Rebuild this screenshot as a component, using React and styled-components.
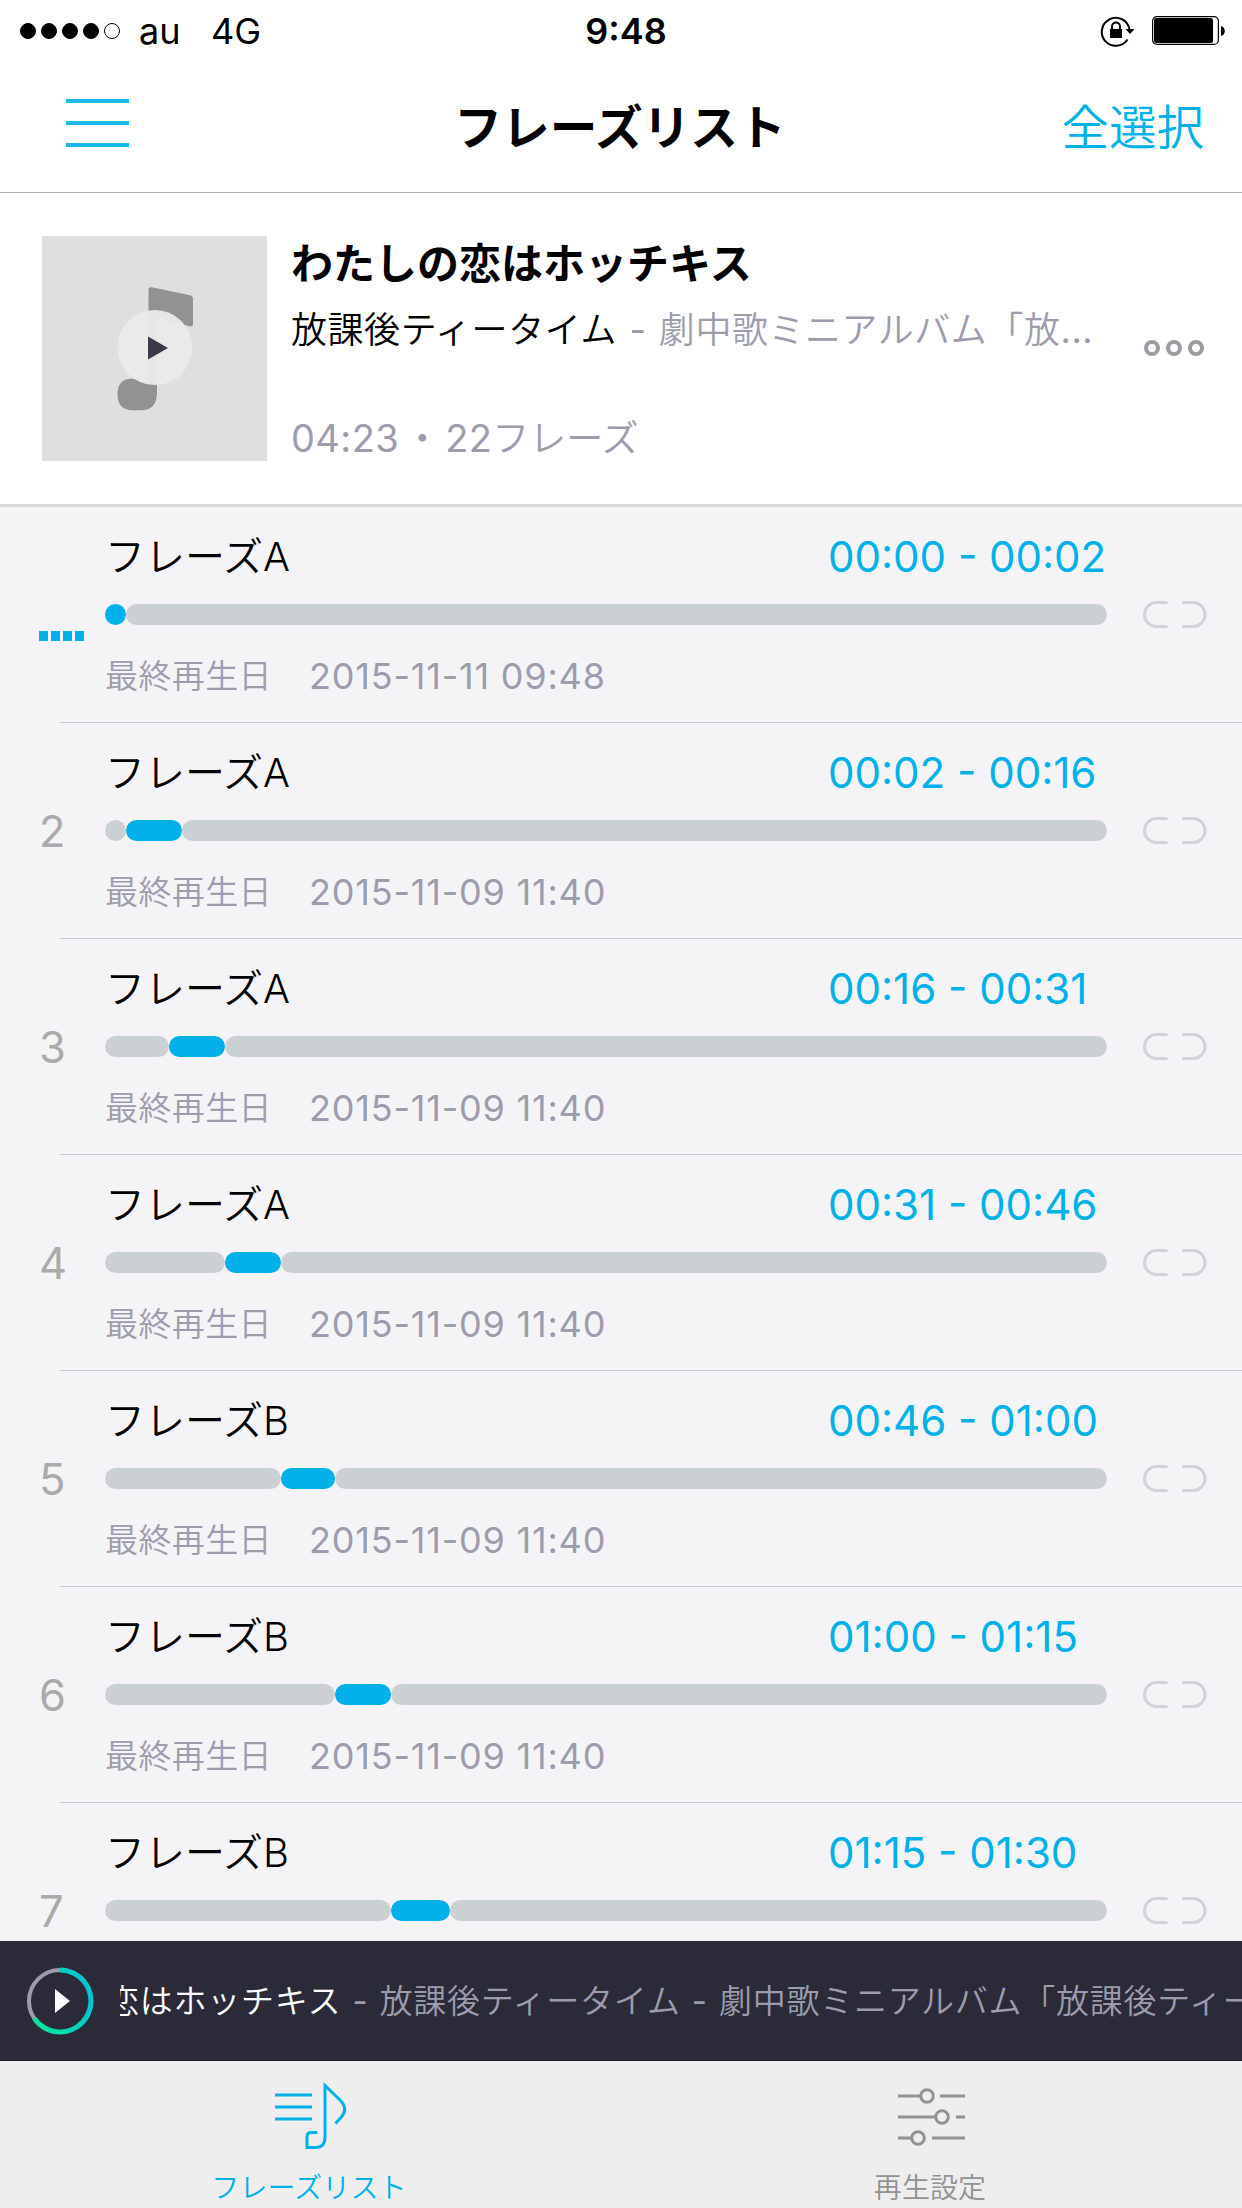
import React from 'react';
import styled, { createGlobalStyle } from 'styled-components';

const GlobalStyle = createGlobalStyle`
  * { box-sizing: border-box; }
  body {
    margin: 0;
    background: #fff;
    font-family: Inter, 'Noto Sans CJK JP', sans-serif;
    color: #000;
  }
`;

const TOTAL = 1002;

const phrases = [
  { id: 1, name: 'フレーズA', time: '00:00 - 00:02', played: '2015-11-11 09:48', before: 0, length: 21, playing: true },
  { id: 2, name: 'フレーズA', time: '00:02 - 00:16', played: '2015-11-09 11:40', before: 21, length: 56 },
  { id: 3, name: 'フレーズA', time: '00:16 - 00:31', played: '2015-11-09 11:40', before: 64, length: 56 },
  { id: 4, name: 'フレーズA', time: '00:31 - 00:46', played: '2015-11-09 11:40', before: 120, length: 56 },
  { id: 5, name: 'フレーズB', time: '00:46 - 01:00', played: '2015-11-09 11:40', before: 176, length: 54 },
  { id: 6, name: 'フレーズB', time: '01:00 - 01:15', played: '2015-11-09 11:40', before: 230, length: 56 },
  { id: 7, name: 'フレーズB', time: '01:15 - 01:30', played: '2015-11-09 11:40', before: 286, length: 59 },
];

const RotationLock = () => (
  <svg width="36" height="32" viewBox="0 0 36 32">
    <path d="M27.500 24.500A14 14 0 1 1 29.500 14" fill="none" stroke="#000" strokeWidth="2" />
    <path d="M25.500 14h9l-4.500 5z" />
    <path d="M12 15v-3.500a4 4 0 0 1 8 0V15" fill="none" stroke="#000" strokeWidth="2" />
    <rect x="10" y="14" width="12" height="9" />
  </svg>
);

const Battery = () => (
  <svg width="74" height="30" viewBox="0 0 74 30">
    <rect x="0.6" y="0.6" width="65.800" height="27.800" rx="4.500" fill="none" stroke="#000" strokeWidth="1.2" />
    <rect x="2" y="2" width="59" height="25" rx="2.5" />
    <path d="M69 10c5 1 5 9 0 10z" />
  </svg>
);

const MusicNote = () => (
  <svg width="225" height="225" viewBox="0 0 225 225">
    <path
      d="M106.500 54q0-3.500 3.500-2.700l38 8q3 .7 3 3.700v24.500q0 3.500-3.500 2.700l-32.500-8v74q0 18-16 18h-8q-15.500 0-15.500-16t15-15.500q6 0 10 2.500 6 1 6-6z"
      fill="#929292"
    />
    <circle cx="112.800" cy="111.500" r="37.500" fill="#ebebeb" fillOpacity="0.94" />
    <path d="M106 100.500v23l20-11.500z" fill="#3b394a" />
  </svg>
);

const LinkIcon = () => (
  <svg width="64" height="27" viewBox="0 0 64 27">
    <path d="M24.500 1.500h-11a12 12 0 0 0 0 24h11M39 1.500h11a12 12 0 0 1 0 24h-11" fill="none" stroke="#d3d2da" strokeWidth="3" />
  </svg>
);

const ProgressPlay = () => (
  <svg width="68" height="68" viewBox="0 0 68 68">
    <defs>
      <linearGradient id="ring" x1="0.05" y1="0.85" x2="0.95" y2="0.45">
        <stop offset="0" stopColor="#00e69b" />
        <stop offset="1" stopColor="#00c6d2" />
      </linearGradient>
    </defs>
    <circle cx="34" cy="34" r="31" fill="none" stroke="#9d9cad" strokeWidth="4" />
    <path d="M34 3A31 31 0 1 1 8.300 51.400" fill="none" stroke="url(#ring)" strokeWidth="5" />
    <path d="M29 22v24l15-12z" fill="#fff" />
  </svg>
);

const PhraseListIcon = () => (
  <svg width="74" height="68" viewBox="0 0 74 68" fill="none" stroke="#00b1e9" strokeWidth="3">
    <path d="M1 13h37M1 25h37M1 37h37" />
    <path d="M43.500 50.500H37q-4 0-4 4V65.500h8.500q9.500 0 9.500-10.500V3.500L66 18c6.500 6.500 6 12 1 17.500l-5.500 6" />
  </svg>
);

const SettingsIcon = () => (
  <svg width="68" height="60" viewBox="0 0 68 60" fill="none" stroke="#929292" strokeWidth="3">
    <circle cx="29" cy="9" r="6.300" />
    <circle cx="44" cy="30" r="6.300" />
    <circle cx="20" cy="51" r="6.300" />
    <path d="M0 9h22M42 9h25M0 30h37M58 30h9M0 51h13M34 51h33" />
  </svg>
);

const PhraseRow = ({ phrase }) => {
  const { id, name, time, played, before, length, playing } = phrase;
  return (
    <Row>
      <RowNumber>
        {playing ? <Equalizer><i /><i /><i /><i /></Equalizer> : id}
      </RowNumber>
      <RowBody>
        <RowHead>
          <PhraseName>{name}</PhraseName>
          <PhraseTime>{time}</PhraseTime>
        </RowHead>
        <BarLine>
          <Bar>
            {before > 0 && <Segment style={{ width: before }} />}
            <Segment $active style={{ width: length }} />
            <Segment style={{ width: TOTAL - before - length }} />
          </Bar>
          <LinkIcon />
        </BarLine>
        <LastPlayed>
          <Label>最終再生日</Label>
          <PlayDate>{played}</PlayDate>
        </LastPlayed>
      </RowBody>
    </Row>
  );
};

const App = () => {
  return (
    <Screen>
      <GlobalStyle />
      <StatusBar>
        <Carrier>
          <Signal><i /><i /><i /><i /><i /></Signal>
          <span>au</span>
          <span>4G</span>
        </Carrier>
        <Clock>9:48</Clock>
        <StatusIcons>
          <RotationLock />
          <Battery />
        </StatusIcons>
      </StatusBar>
      <NavBar>
        <MenuButton><i /><i /><i /></MenuButton>
        <NavTitle>フレーズリスト</NavTitle>
        <SelectAll>全選択</SelectAll>
      </NavBar>
      <SongCard>
        <Artwork><MusicNote /></Artwork>
        <SongInfo>
          <SongTitle>わたしの恋はホッチキス</SongTitle>
          <SongArtist>放課後ティータイム<span><Dash>-</Dash>劇中歌ミニアルバム「放<b>...</b></span></SongArtist>
          <SongMeta><b>04:23</b><Dot>・</Dot><b>22</b>フレーズ</SongMeta>
        </SongInfo>
        <MoreButton><i /><i /><i /></MoreButton>
      </SongCard>
      <PhraseList>
        {phrases.map((phrase) => (
          <PhraseRow key={phrase.id} phrase={phrase} />
        ))}
      </PhraseList>
      <Player>
        <ProgressPlay />
        <Marquee>
          <MarqueeText>恋はホッチキス<span><Dash>-</Dash>放課後ティータイム<Dash>-</Dash>劇中歌ミニアルバム「放課後ティー</span></MarqueeText>
        </Marquee>
      </Player>
      <TabBar>
        <Tab $active>
          <PhraseListIcon />
          <span>フレーズリスト</span>
        </Tab>
        <Tab>
          <SettingsIcon />
          <span>再生設定</span>
        </Tab>
      </TabBar>
    </Screen>
  );
};

const Screen = styled.div`
  width: 1242px;
  height: 2208px;
  display: flex;
  flex-direction: column;
  overflow: hidden;
  white-space: nowrap;
  font-weight: 350;
`;
const StatusBar = styled.header`
  height: 60px;
  flex: none;
  display: grid;
  grid-template-columns: 1fr auto 1fr;
  align-items: center;
  padding: 2px 16px 0 20px;
  font-size: 36px;
  font-weight: 400;
`;
const Carrier = styled.div`
  display: flex;
  align-items: center;
  span:nth-child(2) { width: 72px; }
`;
const Signal = styled.div`
  display: flex;
  gap: 5px;
  width: 119px;
  i {
    width: 16px;
    height: 16px;
    border-radius: 50%;
    border: 1px solid #000;
    background: #000;
  }
  i:last-child { background: transparent; }
`;
const Clock = styled.span`
  padding-left: 6px;
  font-weight: 600;
`;
const StatusIcons = styled.div`
  display: flex;
  justify-content: flex-end;
  align-items: center;
  gap: 16px;
`;
const NavBar = styled.nav`
  height: 133px;
  flex: none;
  display: grid;
  grid-template-columns: 1fr auto 1fr;
  border-bottom: 1px solid #b2b2b2;
`;
const MenuButton = styled.div`
  display: flex;
  flex-direction: column;
  gap: 18px;
  padding: 39px 0 0 66px;
  i {
    width: 63px;
    height: 4px;
    background: #1cb8eb;
  }
`;
const NavTitle = styled.h1`
  margin: 0;
  padding-right: 2px;
  font-size: 47.7px;
  font-weight: 600;
  line-height: 136px;
`;
const SelectAll = styled.span`
  justify-self: end;
  padding-right: 38px;
  font-size: 47.5px;
  line-height: 136px;
  color: #00b1e9;
`;
const SongCard = styled.section`
  height: 314px;
  flex: none;
  display: flex;
  padding: 43px 38px 0 42px;
  border-bottom: 3px solid #d8d8db;
`;
const Artwork = styled.div`
  width: 225px;
  height: 225px;
  background: #dfdfdf;
`;
const SongInfo = styled.div`
  flex: 1;
  padding-left: 24px;
  b { font-weight: 400; }
`;
const SongTitle = styled.h2`
  margin: 0;
  padding-top: 1px;
  font-size: 42px;
  font-weight: 600;
  line-height: 54px;
`;
const SongArtist = styled.p`
  margin: 9px 0 0;
  font-size: 36px;
  line-height: 60px;
  letter-spacing: 0.55px;
  span { color: #9d9cad; }
`;
const Dash = styled.i`
  display: inline-block;
  width: 1.16em;
  font-style: normal;
  font-weight: 400;
  text-align: center;
`;
const SongMeta = styled.p`
  margin: 50px 0 0;
  font-size: 37px;
  line-height: 56px;
  color: #9d9cad;
  b {
    font-size: 38px;
    letter-spacing: 0.4px;
  }
`;
const Dot = styled.span`
  display: inline-block;
  width: 46px;
  text-align: center;
`;
const MoreButton = styled.div`
  display: flex;
  gap: 6px;
  padding-top: 104px;
  i {
    width: 16px;
    height: 16px;
    border-radius: 50%;
    border: 4px solid #9c9ba3;
  }
`;
const PhraseList = styled.main`
  height: 1434px;
  flex: none;
  overflow: hidden;
  background: #f4f4f7;
`;
const Row = styled.article`
  height: 216px;
  display: flex;
  background: linear-gradient(#c8c7cc, #c8c7cc) 60px 215px / 1182px 1px no-repeat;
`;
const RowNumber = styled.div`
  width: 105px;
  padding: 84px 0 0 39px;
  font-size: 43.5px;
  font-weight: 400;
  line-height: 48px;
  color: #aaa;
`;
const Equalizer = styled.div`
  display: flex;
  gap: 3px;
  padding-top: 40px;
  i {
    width: 9px;
    height: 10px;
    background: #00b1e9;
  }
`;
const RowBody = styled.div`
  flex: 1;
`;
const RowHead = styled.div`
  display: flex;
  height: 94px;
  padding-top: 20px;
  font-size: 42px;
  line-height: 60px;
`;
const PhraseName = styled.span`
  width: 723px;
  font-size: 40px;
`;
const PhraseTime = styled.span`
  font-weight: 380;
  color: #00b1e9;
`;
const BarLine = styled.div`
  display: flex;
  align-items: center;
  height: 27px;
`;
const Bar = styled.div`
  display: flex;
  width: 1002px;
  margin-right: 36px;
`;
const Segment = styled.div`
  height: 21px;
  border-radius: 10.5px;
  background: ${(props) => (props.$active ? '#00b1e9' : '#cbd0d3')};
`;
const LastPlayed = styled.p`
  display: flex;
  margin: 18px 0 0;
  line-height: 60px;
  color: #9d9cad;
`;
const Label = styled.span`
  width: 204px;
  font-size: 33px;
  letter-spacing: 0.4px;
`;
const PlayDate = styled.span`
  font-size: 36px;
  font-weight: 400;
  letter-spacing: 0.8px;
`;
const Player = styled.section`
  height: 120px;
  flex: none;
  display: flex;
  align-items: center;
  padding-left: 26px;
  background: #2b2a39;
  border-bottom: 1px solid #1d1c2a;
`;
const Marquee = styled.div`
  flex: 1;
  display: flex;
  margin-left: 26px;
  overflow: hidden;
`;
const MarqueeText = styled.span`
  margin-left: -14px;
  font-size: 33px;
  line-height: 60px;
  letter-spacing: 0.75px;
  color: #fff;
  span { color: #9d9cad; }
`;
const TabBar = styled.footer`
  flex: 1;
  display: grid;
  grid-template-columns: 1fr 1fr;
  background: #eee;
`;
const Tab = styled.div`
  display: flex;
  flex-direction: column;
  align-items: center;
  padding-top: 21px;
  font-size: 28px;
  line-height: 40px;
  color: ${(props) => (props.$active ? '#00b1e9' : '#929292')};
  svg {
    margin: ${(props) => (props.$active ? '0 0 18px' : '5px 0 21px')};
  }
  span {
    padding-right: 3px;
    letter-spacing: 0.1px;
  }
`;

export default App;
